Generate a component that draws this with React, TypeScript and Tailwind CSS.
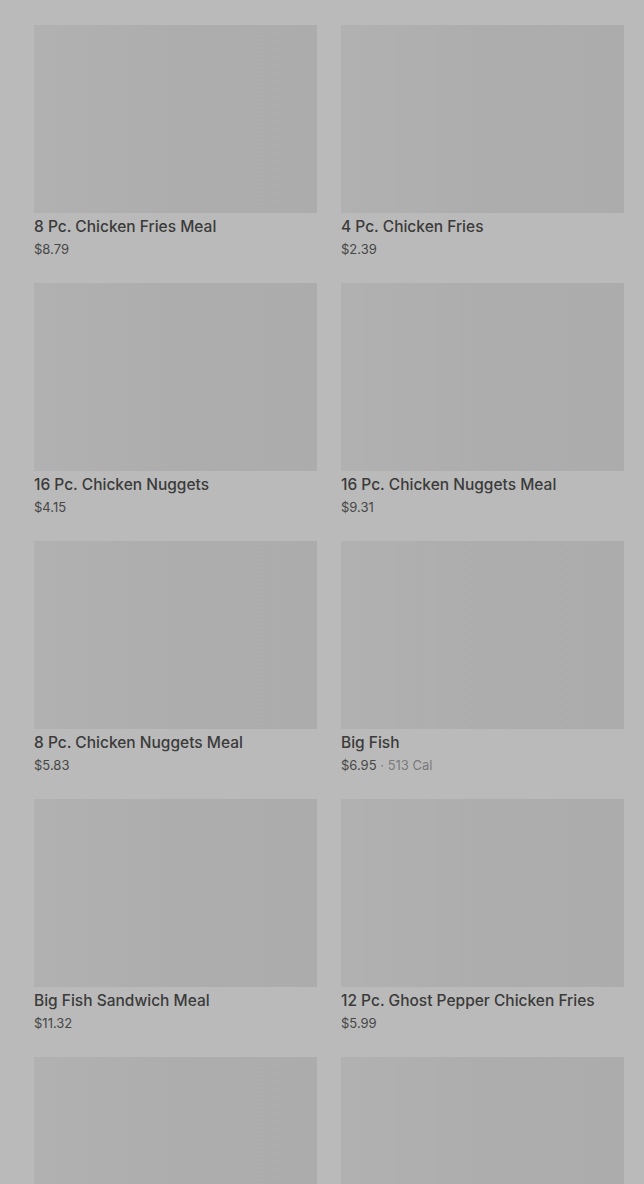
import React from 'react';

interface Item {
  name: string;
  price: string;
  cal?: string;
}

const items: Item[] = [
  { name: '8 Pc. Chicken Fries Meal', price: '$8.79' },
  { name: '4 Pc. Chicken Fries', price: '$2.39' },
  { name: '16 Pc. Chicken Nuggets', price: '$4.15' },
  { name: '16 Pc. Chicken Nuggets Meal', price: '$9.31' },
  { name: '8 Pc. Chicken Nuggets Meal', price: '$5.83' },
  { name: 'Big Fish', price: '$6.95', cal: '513 Cal' },
  { name: 'Big Fish Sandwich Meal', price: '$11.32' },
  { name: '12 Pc. Ghost Pepper Chicken Fries', price: '$5.99' },
];

const Thumb = () => (
  <div className="h-[188px] w-full bg-gradient-to-r from-[#b1b1b1] via-[#adadad] to-[#acacac]" />
);

const MenuCard: React.FC<{ item: Item }> = ({ item }) => (
  <div className="flex flex-col">
    <Thumb />
    <div className="mt-1 text-[15.5px] leading-5 font-medium text-[#3b3b3b]">
      {item.name}
    </div>
    <div className="mt-[3px] mb-[1px] text-[13px] leading-[18px] text-[#474747]">
      {item.price}
      {item.cal && (
        <span className="text-[#7a7a7a]"> · {item.cal}</span>
      )}
    </div>
  </div>
);

export default function App() {
  return (
    <div
      className="w-full h-[1184px] overflow-hidden bg-[#bababa]"
      style={{ fontFamily: 'Inter, "Noto Sans", sans-serif' }}
    >
      <div className="grid grid-cols-2 gap-x-6 gap-y-6 pl-[34px] pr-5 pt-[25px]">
        {items.map((item, i) => (
          <MenuCard key={i} item={item} />
        ))}
        <Thumb />
        <Thumb />
      </div>
    </div>
  );
}
